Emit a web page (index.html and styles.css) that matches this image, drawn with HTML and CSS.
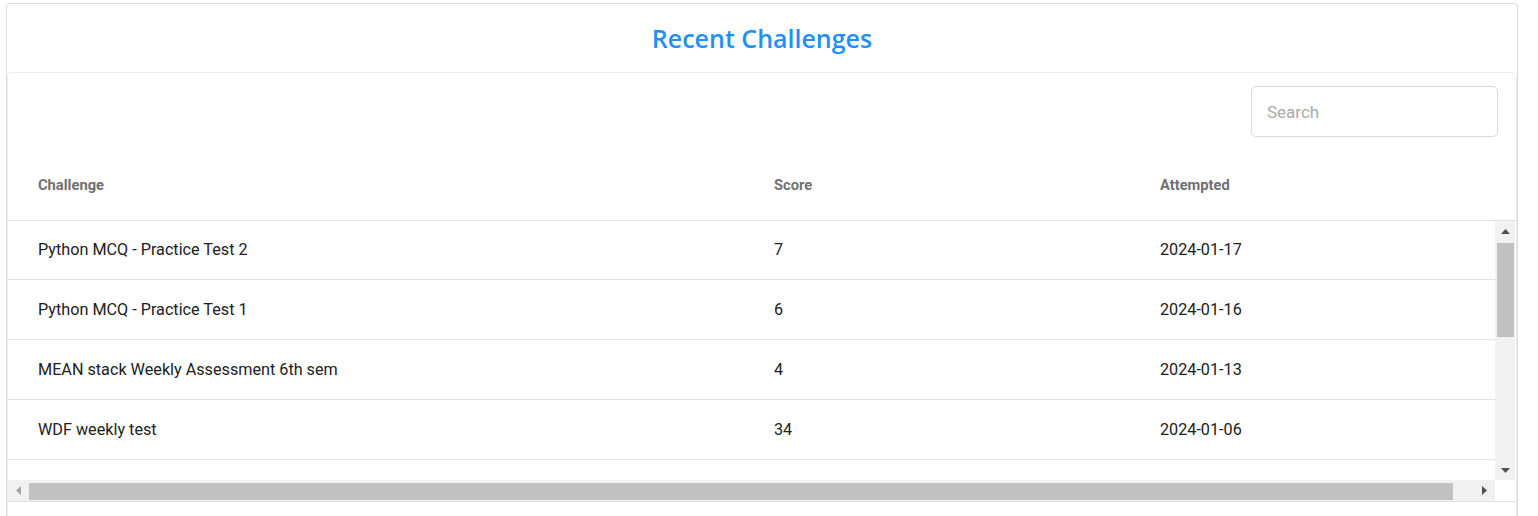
FILE: index.html
```html
<!DOCTYPE html>
<html lang="en">
<head>
<meta charset="utf-8">
<title>Recent Challenges</title>
<link rel="stylesheet" href="styles.css">
</head>
<body>
<div class="page">
  <section class="card">
    <header class="card-header">
      <h2 class="card-title">Recent Challenges</h2>
    </header>
    <div class="inner">
      <div class="toolbar">
        <input class="search" type="text" placeholder="Search">
      </div>
      <table class="grid grid-head">
        <colgroup><col class="c1"><col class="c2"><col class="c3"></colgroup>
        <thead>
          <tr><th>Challenge</th><th>Score</th><th>Attempted</th></tr>
        </thead>
      </table>
      <div class="scroller">
        <div class="viewport">
          <table class="grid grid-body">
            <colgroup><col class="c1"><col class="c2"><col class="c3"></colgroup>
            <tbody>
              <tr><td>Python MCQ - Practice Test 2</td><td>7</td><td>2024-01-17</td></tr>
              <tr><td>Python MCQ - Practice Test 1</td><td>6</td><td>2024-01-16</td></tr>
              <tr><td>MEAN stack Weekly Assessment 6th sem</td><td>4</td><td>2024-01-13</td></tr>
              <tr><td>WDF weekly test</td><td>34</td><td>2024-01-06</td></tr>
              <tr><td>&nbsp;</td><td></td><td></td></tr>
            </tbody>
          </table>
        </div>
        <div class="vbar">
          <div class="sb-btn sb-btn-v">
            <svg width="9" height="5" viewBox="0 0 9 5"><path d="M4.5 0L9 5H0z" fill="#505050"/></svg>
          </div>
          <div class="vtrack"><div class="vthumb"></div></div>
          <div class="sb-btn sb-btn-v">
            <svg width="9" height="5" viewBox="0 0 9 5"><path d="M0 0H9L4.5 5z" fill="#505050"/></svg>
          </div>
        </div>
        <div class="hbar">
          <div class="sb-btn sb-btn-h">
            <svg width="5" height="9" viewBox="0 0 5 9"><path d="M5 0V9L0 4.5z" fill="#a3a3a3"/></svg>
          </div>
          <div class="htrack"><div class="hthumb"></div></div>
          <div class="sb-btn sb-btn-h">
            <svg width="5" height="9" viewBox="0 0 5 9"><path d="M0 0L5 4.5L0 9z" fill="#505050"/></svg>
          </div>
        </div>
        <div class="corner"></div>
      </div>
    </div>
  </section>
</div>
</body>
</html>
```

FILE: styles.css
```css
* { box-sizing: border-box; }
html, body { margin: 0; padding: 0; background: #fff; }
body { font-family: Roboto, "Liberation Sans", Arial, sans-serif; }

.page { padding: 3px 0 0 6px; }

.card {
  width: 1512px;
  border: 1px solid #dcdcdc;
  border-radius: 4px;
  background: #fff;
}

.card-header {
  height: 68px;
  display: flex;
  align-items: center;
  justify-content: center;
}

.card-title {
  margin: 0;
  font-family: "Open Sans", Inter, sans-serif;
  font-weight: 600;
  font-size: 25px;
  color: #2190f6;
}

.inner {
  border: 1px solid #ececec;
  border-radius: 4px;
  height: 460px;
}

.toolbar {
  display: flex;
  justify-content: flex-end;
  padding: 13px 18px 0 0;
}

.search {
  width: 247px;
  height: 51px;
  border: 1px solid #dadada;
  border-radius: 5px;
  padding: 0 15px;
  font-family: Roboto, sans-serif;
  font-size: 17px;
  color: #333;
  outline: none;
}
.search::placeholder { color: #a9a9a9; }

.grid {
  border-collapse: separate;
  border-spacing: 0;
  table-layout: fixed;
}
.grid-head { width: 100%; }
.grid-body { width: 1509px; }
.c1 { width: 736px; }
.c2 { width: 386px; }

.grid th {
  text-align: left;
  font-weight: 700;
  font-size: 14.7px;
  color: #707070;
  padding: 40px 30px 27px;
  line-height: 16px;
  border-bottom: 1px solid #e2e2e2;
}

.grid td {
  height: 60px;
  padding: 0 30px;
  font-size: 16.2px;
  color: #212121;
  border-bottom: 1px solid #e2e2e2;
  white-space: nowrap;
}
.grid tr:first-child td { height: 59px; padding-bottom: 1px; }

.scroller {
  height: 281px;
  display: grid;
  grid-template-columns: 1fr 20px;
  grid-template-rows: 1fr 21px;
  padding-right: 1px;
  border-bottom: 1px solid #e2e2e2;
}

.viewport { overflow: hidden; }

.vbar {
  background: #f1f1f1;
  display: flex;
  flex-direction: column;
}
.vtrack { flex: 1; padding: 2px 1px 0 2px; }
.vthumb { height: 94px; background: #c1c1c1; }

.hbar {
  background: #f1f1f1;
  display: flex;
}
.htrack { flex: 1; padding: 3px 0 1px 0; }
.hthumb { width: 1424px; height: 100%; background: #c1c1c1; }

.sb-btn {
  display: flex;
  align-items: center;
  justify-content: center;
  flex: none;
}
.sb-btn svg { display: block; }
.sb-btn-v { height: 20px; }
.sb-btn-h { width: 21px; }

.corner { background: #fff; }
```
